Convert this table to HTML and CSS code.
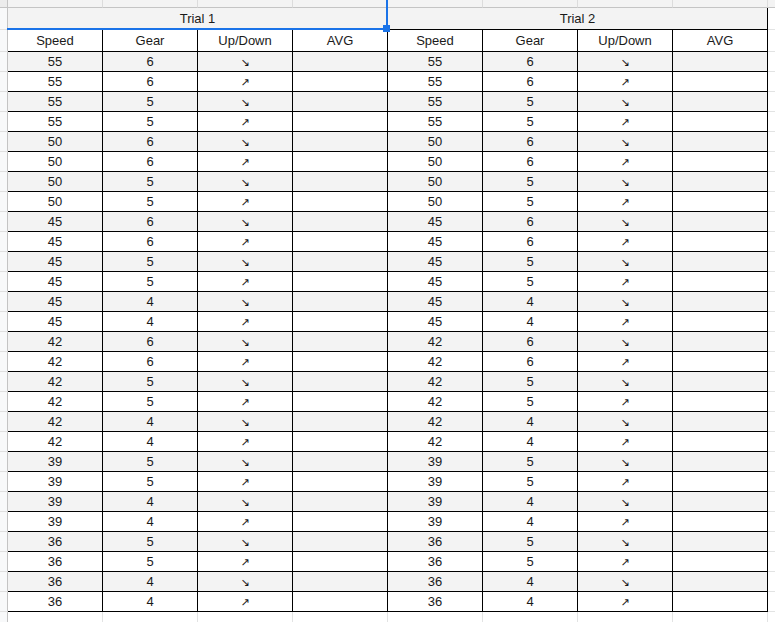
FILE: index.html
```html
<!DOCTYPE html>
<html>
<head>
<meta charset="utf-8">
<link rel="stylesheet" href="styles.css">
</head>
<body>
<div class="wrap">
<table class="grid">
<tr class="colhdr"><td class="corner"></td><td class="ch"></td><td class="ch"></td><td class="ch"></td><td class="ch"></td><td class="ch"></td><td class="ch"></td><td class="ch"></td><td class="ch"></td><td class="chx"></td></tr>
<tr class="trial"><td class="rh"></td><td class="tc" colspan="4">Trial 1</td><td class="tc" colspan="4">Trial 2</td><td class="x"></td></tr>
<tr class="head"><td class="rh"></td><td>Speed</td><td>Gear</td><td>Up/Down</td><td>AVG</td><td>Speed</td><td>Gear</td><td>Up/Down</td><td>AVG</td><td class="x"></td></tr>
<tr class="g"><td class="rh"></td><td>55</td><td>6</td><td class="a">↘</td><td></td><td>55</td><td>6</td><td class="a">↘</td><td></td><td class="x"></td></tr>
<tr><td class="rh"></td><td>55</td><td>6</td><td class="a">↗</td><td></td><td>55</td><td>6</td><td class="a">↗</td><td></td><td class="x"></td></tr>
<tr class="g"><td class="rh"></td><td>55</td><td>5</td><td class="a">↘</td><td></td><td>55</td><td>5</td><td class="a">↘</td><td></td><td class="x"></td></tr>
<tr><td class="rh"></td><td>55</td><td>5</td><td class="a">↗</td><td></td><td>55</td><td>5</td><td class="a">↗</td><td></td><td class="x"></td></tr>
<tr class="g"><td class="rh"></td><td>50</td><td>6</td><td class="a">↘</td><td></td><td>50</td><td>6</td><td class="a">↘</td><td></td><td class="x"></td></tr>
<tr><td class="rh"></td><td>50</td><td>6</td><td class="a">↗</td><td></td><td>50</td><td>6</td><td class="a">↗</td><td></td><td class="x"></td></tr>
<tr class="g"><td class="rh"></td><td>50</td><td>5</td><td class="a">↘</td><td></td><td>50</td><td>5</td><td class="a">↘</td><td></td><td class="x"></td></tr>
<tr><td class="rh"></td><td>50</td><td>5</td><td class="a">↗</td><td></td><td>50</td><td>5</td><td class="a">↗</td><td></td><td class="x"></td></tr>
<tr class="g"><td class="rh"></td><td>45</td><td>6</td><td class="a">↘</td><td></td><td>45</td><td>6</td><td class="a">↘</td><td></td><td class="x"></td></tr>
<tr><td class="rh"></td><td>45</td><td>6</td><td class="a">↗</td><td></td><td>45</td><td>6</td><td class="a">↗</td><td></td><td class="x"></td></tr>
<tr class="g"><td class="rh"></td><td>45</td><td>5</td><td class="a">↘</td><td></td><td>45</td><td>5</td><td class="a">↘</td><td></td><td class="x"></td></tr>
<tr><td class="rh"></td><td>45</td><td>5</td><td class="a">↗</td><td></td><td>45</td><td>5</td><td class="a">↗</td><td></td><td class="x"></td></tr>
<tr class="g"><td class="rh"></td><td>45</td><td>4</td><td class="a">↘</td><td></td><td>45</td><td>4</td><td class="a">↘</td><td></td><td class="x"></td></tr>
<tr><td class="rh"></td><td>45</td><td>4</td><td class="a">↗</td><td></td><td>45</td><td>4</td><td class="a">↗</td><td></td><td class="x"></td></tr>
<tr class="g"><td class="rh"></td><td>42</td><td>6</td><td class="a">↘</td><td></td><td>42</td><td>6</td><td class="a">↘</td><td></td><td class="x"></td></tr>
<tr><td class="rh"></td><td>42</td><td>6</td><td class="a">↗</td><td></td><td>42</td><td>6</td><td class="a">↗</td><td></td><td class="x"></td></tr>
<tr class="g"><td class="rh"></td><td>42</td><td>5</td><td class="a">↘</td><td></td><td>42</td><td>5</td><td class="a">↘</td><td></td><td class="x"></td></tr>
<tr><td class="rh"></td><td>42</td><td>5</td><td class="a">↗</td><td></td><td>42</td><td>5</td><td class="a">↗</td><td></td><td class="x"></td></tr>
<tr class="g"><td class="rh"></td><td>42</td><td>4</td><td class="a">↘</td><td></td><td>42</td><td>4</td><td class="a">↘</td><td></td><td class="x"></td></tr>
<tr><td class="rh"></td><td>42</td><td>4</td><td class="a">↗</td><td></td><td>42</td><td>4</td><td class="a">↗</td><td></td><td class="x"></td></tr>
<tr class="g"><td class="rh"></td><td>39</td><td>5</td><td class="a">↘</td><td></td><td>39</td><td>5</td><td class="a">↘</td><td></td><td class="x"></td></tr>
<tr><td class="rh"></td><td>39</td><td>5</td><td class="a">↗</td><td></td><td>39</td><td>5</td><td class="a">↗</td><td></td><td class="x"></td></tr>
<tr class="g"><td class="rh"></td><td>39</td><td>4</td><td class="a">↘</td><td></td><td>39</td><td>4</td><td class="a">↘</td><td></td><td class="x"></td></tr>
<tr><td class="rh"></td><td>39</td><td>4</td><td class="a">↗</td><td></td><td>39</td><td>4</td><td class="a">↗</td><td></td><td class="x"></td></tr>
<tr class="g"><td class="rh"></td><td>36</td><td>5</td><td class="a">↘</td><td></td><td>36</td><td>5</td><td class="a">↘</td><td></td><td class="x"></td></tr>
<tr><td class="rh"></td><td>36</td><td>5</td><td class="a">↗</td><td></td><td>36</td><td>5</td><td class="a">↗</td><td></td><td class="x"></td></tr>
<tr class="g"><td class="rh"></td><td>36</td><td>4</td><td class="a">↘</td><td></td><td>36</td><td>4</td><td class="a">↘</td><td></td><td class="x"></td></tr>
<tr><td class="rh"></td><td>36</td><td>4</td><td class="a">↗</td><td></td><td>36</td><td>4</td><td class="a">↗</td><td></td><td class="x"></td></tr>
<tr class="empty"><td class="rh"></td><td></td><td></td><td></td><td></td><td></td><td></td><td></td><td></td><td class="x"></td></tr>
</table>
<div class="sel-bottom"></div>
<div class="sel-right"></div>
<div class="sel-handle"></div>
</div>
</body>
</html>
```
FILE: styles.css
```css
html, body {
  margin: 0;
  padding: 0;
  background: #ffffff;
}
body {
  font-family: "Liberation Sans", Arial, sans-serif;
  font-size: 13px;
  color: #1a1a1a;
}
.wrap {
  position: relative;
  width: 775px;
  height: 622px;
  overflow: hidden;
}
.grid {
  border-collapse: separate;
  border-spacing: 0;
  table-layout: fixed;
  width: 788px;
}
.grid td {
  box-sizing: border-box;
  padding: 0;
  height: 20px;
  line-height: 15px;
  text-align: center;
  vertical-align: middle;
  white-space: nowrap;
  overflow: hidden;
  border-right: 1px solid #000000;
  border-bottom: 1px solid #000000;
}
.colhdr td {
  height: 8px;
  line-height: 1px;
  font-size: 1px;
  background: #f3f3f3;
  border-right: 1px solid #dcdcdc;
  border-bottom: 1px solid #c4c4c4;
}
.grid td.corner {
  width: 8px;
  background: #ececec;
  border-right: 1px solid #c4c4c4;
}
.grid td.ch {
  width: 95px;
}
.grid td.chx {
  width: 20px;
  border-right: none;
}
.grid td.rh {
  background: #f8f9fa;
  border-right: 1px solid #c4c4c4;
  border-bottom: 1px solid #e0e0e0;
}
.grid td.x {
  background: #ffffff;
  border-right: none;
  border-bottom: 1px solid #e2e3e3;
}
.trial td {
  height: 22px;
}
.grid .trial td.tc {
  background: #f3f3f3;
}
.head td {
  height: 22px;
}
.grid tr.g td {
  background: #f3f3f3;
}
.grid tr.g td.rh {
  background: #f8f9fa;
}
.grid tr.g td.x {
  background: #ffffff;
}
.grid td.a {
  font-family: "DejaVu Sans", sans-serif;
  font-size: 11px;
  padding-top: 1px;
}
.grid tr.empty td {
  border-right: 1px solid #e2e3e3;
  border-bottom: 1px solid #e2e3e3;
}
.grid tr.empty td.rh {
  border-right: 1px solid #c4c4c4;
}
.grid tr.empty td.x {
  border-right: none;
}
.sel-bottom {
  position: absolute;
  left: 7px;
  top: 28px;
  width: 381px;
  height: 2px;
  background: #1a73e8;
}
.sel-right {
  position: absolute;
  left: 386px;
  top: 0;
  width: 2px;
  height: 30px;
  background: #1a73e8;
}
.sel-handle {
  position: absolute;
  left: 383px;
  top: 25px;
  width: 7px;
  height: 7px;
  background: #1a73e8;
}
```
